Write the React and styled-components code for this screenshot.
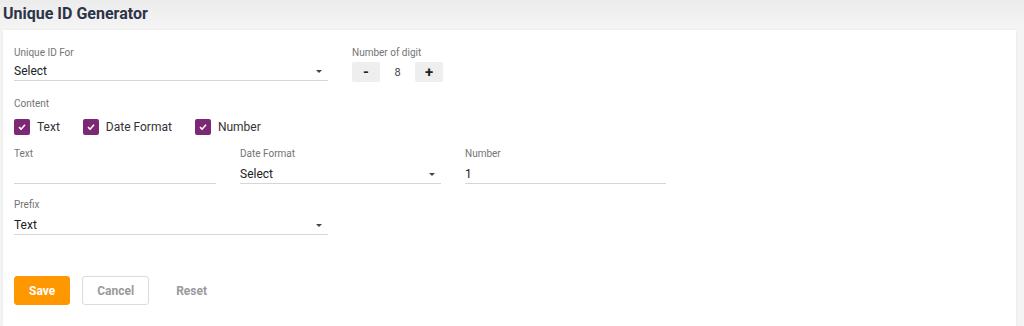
import styled, { createGlobalStyle } from "styled-components";

const GlobalStyle = createGlobalStyle`
  body {
    margin: 0;
    background: #f4f4f4;
    font-family: Roboto, "Liberation Sans", Arial, sans-serif;
  }
`;

const Page = styled.div`
  height: 326px;
  overflow: hidden;
  box-sizing: border-box;
  padding: 0 8px 0 3px;
  display: flex;
  flex-direction: column;
  background: linear-gradient(#ececec 0px, #f4f4f4 28px);
`;

const Title = styled.h1`
  margin: 0;
  height: 30px;
  flex-shrink: 0;
  display: flex;
  align-items: center;
  padding-bottom: 4px;
  box-sizing: border-box;
  font-size: 16px;
  font-weight: 700;
  color: #2e3447;
`;

const Card = styled.div`
  flex: 1;
  background: #ffffff;
  padding: 16px 11px 20px;
  box-shadow: 0 0 3px rgba(0, 0, 0, 0.06);
  display: flex;
  flex-direction: column;
`;

const Row = styled.div`
  display: flex;
  gap: 24px;
  margin-top: ${(p) => p.$top || 0}px;
`;

const Field = styled.div`
  display: flex;
  flex-direction: column;
  width: ${(p) => p.$width}px;
`;

const Label = styled.div`
  font-size: 10px;
  line-height: 14px;
  color: #747474;
  margin-bottom: ${(p) => p.$gap ?? 4}px;
`;

const Input = styled.div`
  position: relative;
  height: 18px;
  border-bottom: 1px solid #d6d6d6;
  font-size: 12px;
  line-height: 19px;
  color: #212121;
`;

const Arrow = styled.span`
  position: absolute;
  right: 6px;
  top: 8px;
  width: 0;
  height: 0;
  border-left: 3px solid transparent;
  border-right: 3px solid transparent;
  border-top: 3px solid #444;
`;

const Stepper = styled.div`
  display: flex;
  align-items: center;
  height: 20px;
`;

const StepButton = styled.button`
  width: 28px;
  height: 20px;
  border: none;
  border-radius: 2px;
  background: #eeeeee;
  color: #222;
  font-family: inherit;
  font-size: 15px;
  font-weight: 700;
  line-height: 20px;
  padding: 0;
`;

const StepValue = styled.span`
  width: 35px;
  text-align: center;
  font-size: 11px;
  color: #444;
`;

const Checks = styled.div`
  display: flex;
  gap: 23px;
  margin-top: 8px;
`;

const CheckItem = styled.label`
  display: flex;
  align-items: center;
  gap: 7px;
  font-size: 12px;
  color: #333;
`;

const CheckBox = styled.span`
  width: 16px;
  height: 16px;
  border-radius: 2px;
  background: #7b2875;
  display: flex;
  align-items: center;
  justify-content: center;
`;

const Actions = styled.div`
  display: flex;
  gap: 12px;
  margin-top: 41px;
`;

const Button = styled.button`
  height: 29px;
  padding: 0 14px;
  border-radius: 3px;
  font-family: inherit;
  font-size: 12px;
  font-weight: 700;
  cursor: pointer;
  background: ${(p) => (p.$primary ? "#ff9800" : "#ffffff")};
  color: ${(p) => (p.$primary ? "#ffffff" : "#9a9a9a")};
  border: 1px solid
    ${(p) => (p.$primary ? "#ff9800" : p.$outline ? "#dcdcdc" : "transparent")};
`;

const Check = () => (
  <CheckBox>
    <svg width="10" height="10" viewBox="0 0 10 10">
      <path d="M2 5.2 L4.1 7.2 L8 2.8" fill="none" stroke="#fff" strokeWidth="1.6" />
    </svg>
  </CheckBox>
);

export default function App() {
  return (
    <>
      <GlobalStyle />
      <Page>
        <Title>Unique ID Generator</Title>
        <Card>
          <Row>
            <Field $width={314}>
              <Label $gap={2}>Unique ID For</Label>
              <Input>
                Select
                <Arrow />
              </Input>
            </Field>
            <Field $width={120}>
              <Label $gap={2}>Number of digit</Label>
              <Stepper>
                <StepButton>-</StepButton>
                <StepValue>8</StepValue>
                <StepButton>+</StepButton>
              </Stepper>
            </Field>
          </Row>

          <Row $top={15}>
            <Field $width={314}>
              <Label $gap={0}>Content</Label>
            </Field>
          </Row>
          <Checks>
            <CheckItem>
              <Check />
              Text
            </CheckItem>
            <CheckItem>
              <Check />
              Date Format
            </CheckItem>
            <CheckItem>
              <Check />
              Number
            </CheckItem>
          </Checks>

          <Row $top={12}>
            <Field $width={202}>
              <Label>Text</Label>
              <Input />
            </Field>
            <Field $width={201}>
              <Label>Date Format</Label>
              <Input>
                Select
                <Arrow />
              </Input>
            </Field>
            <Field $width={201}>
              <Label>Number</Label>
              <Input>1</Input>
            </Field>
          </Row>

          <Row $top={14}>
            <Field $width={314}>
              <Label>Prefix</Label>
              <Input>
                Text
                <Arrow />
              </Input>
            </Field>
          </Row>

          <Actions>
            <Button $primary>Save</Button>
            <Button $outline>Cancel</Button>
            <Button>Reset</Button>
          </Actions>
        </Card>
      </Page>
    </>
  );
}
